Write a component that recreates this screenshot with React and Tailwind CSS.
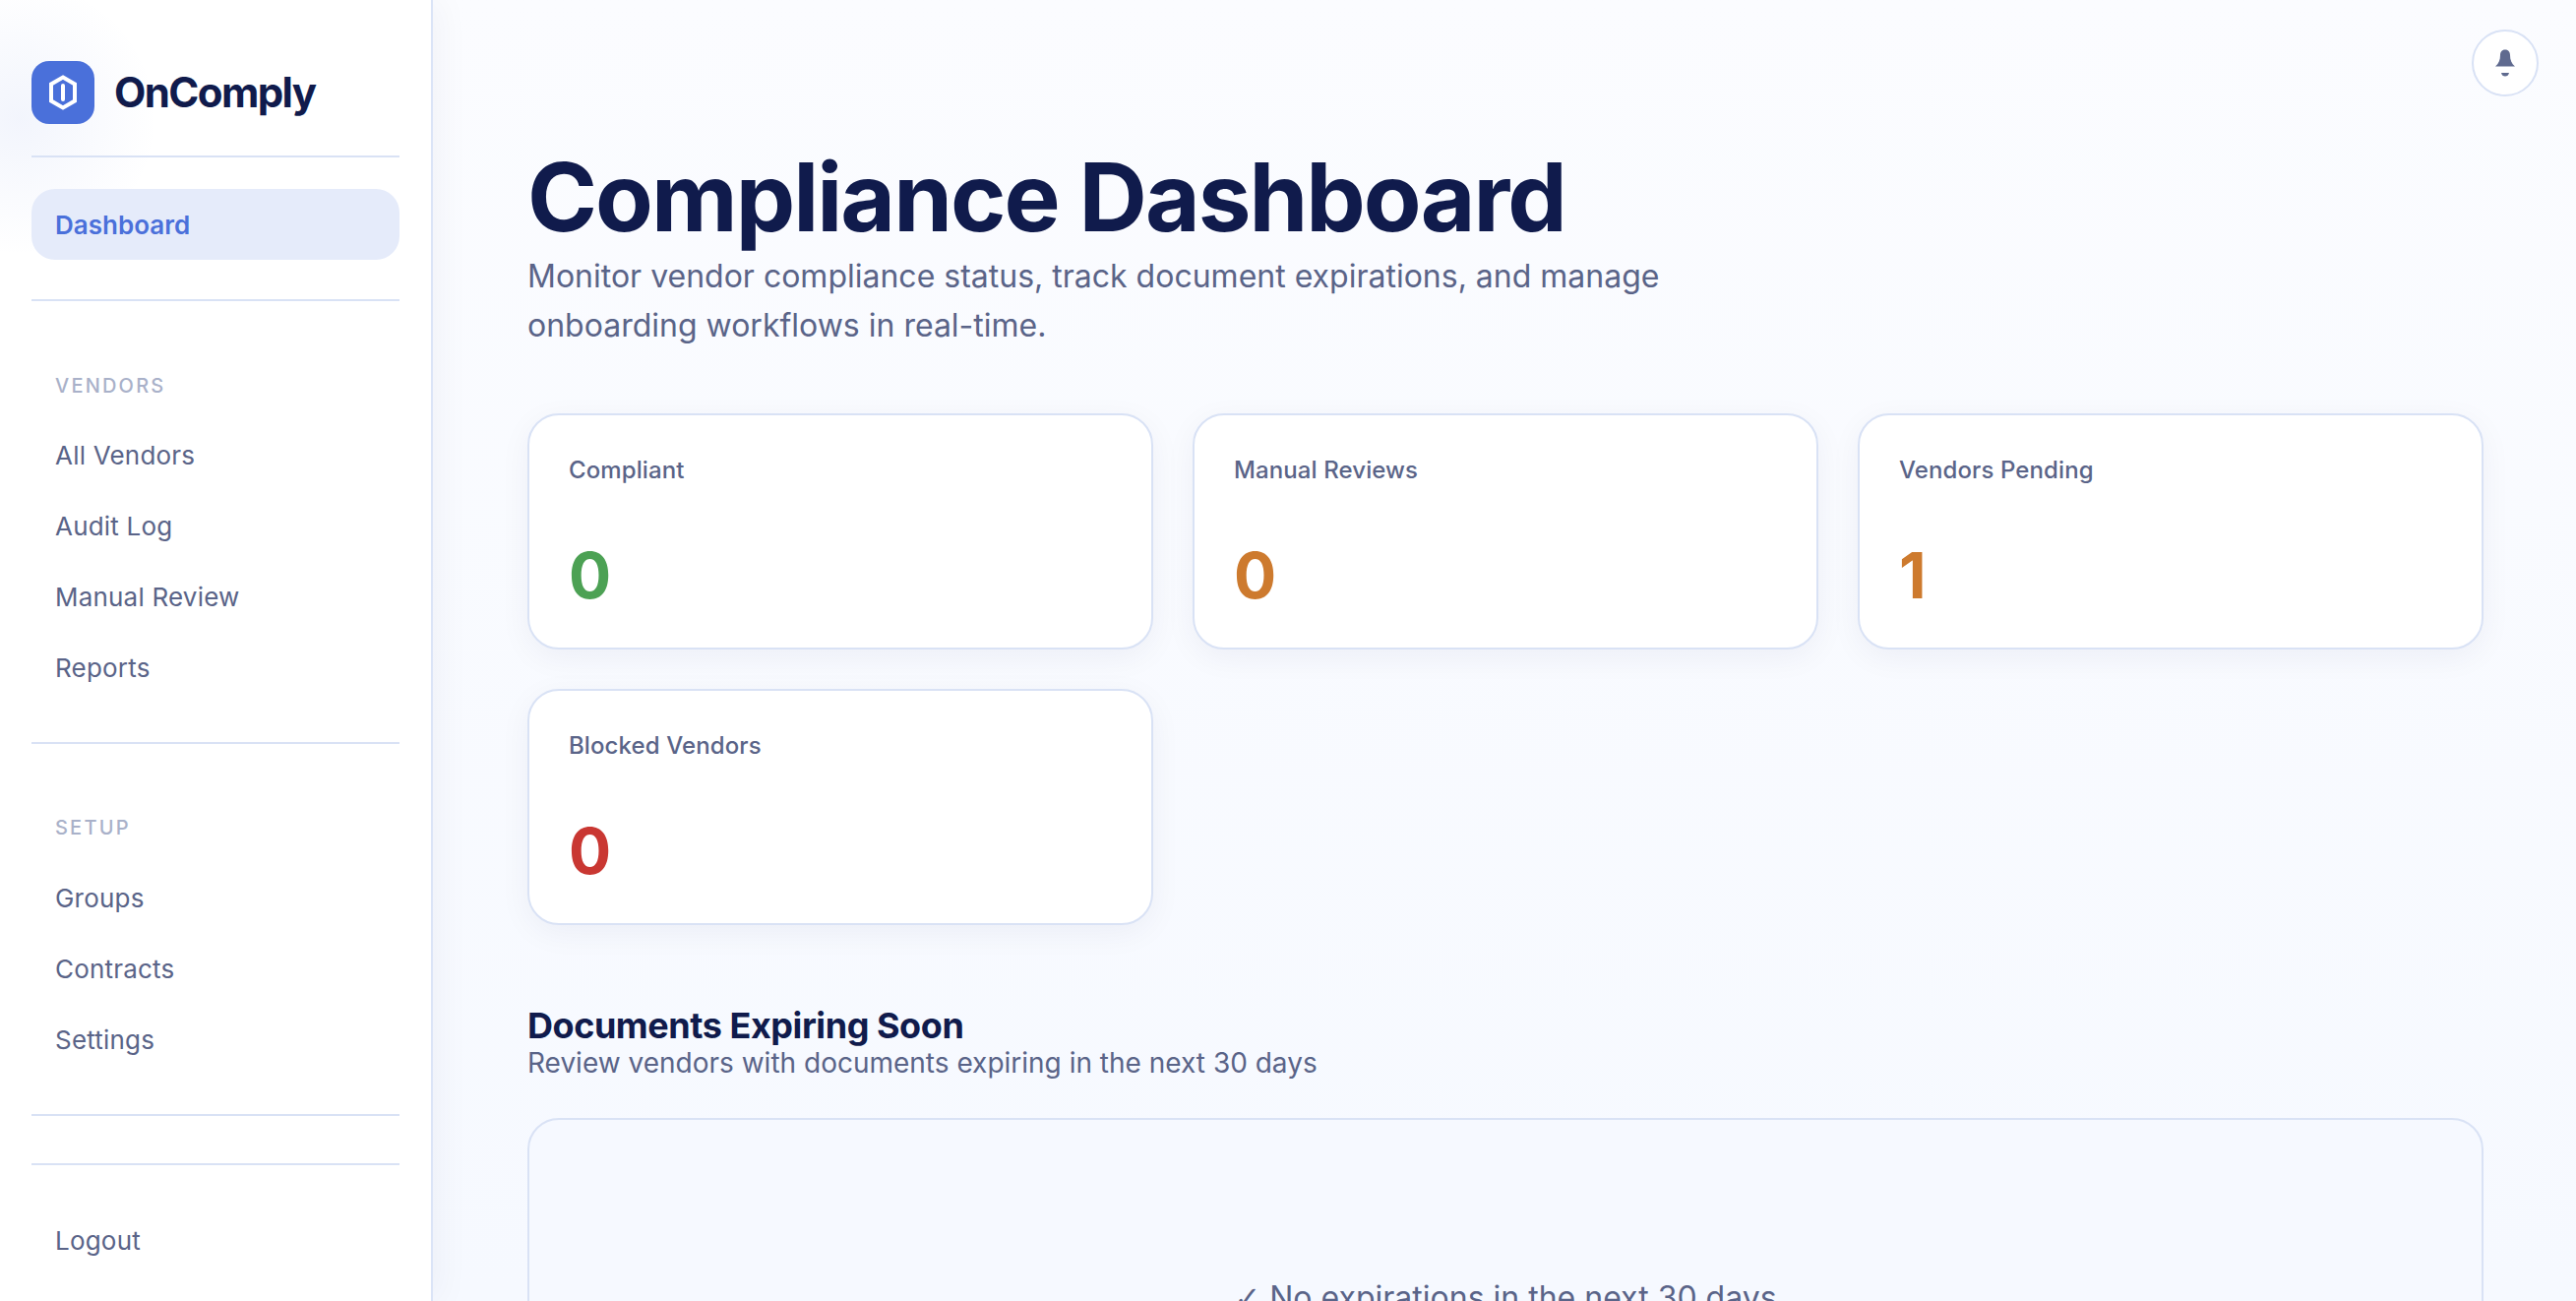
const font = { fontFamily: "Inter, sans-serif" };

function Divider({ className = "" }) {
  return <div className={`h-[2px] bg-[#d9e2f5] ${className}`} />;
}

function NavItem({ label }) {
  return (
    <div className="h-[72px] px-6 flex items-center text-[26px] tracking-[0.2px] text-[#5a6488] font-normal">
      {label}
    </div>
  );
}

function NavLabel({ label }) {
  return (
    <div className="px-6 text-[20px] leading-[24px] tracking-[2.2px] uppercase text-[#a9b1c9] font-medium">
      {label}
    </div>
  );
}

function StatCard({ label, value, color }) {
  return (
    <div className="h-[240px] bg-white rounded-[32px] border-2 border-[#d9e2f5] shadow-[0_8px_32px_rgba(15,27,76,0.05)] px-10 pt-10">
      <div className="text-[24px] leading-[32px] tracking-[0.1px] font-medium text-[#5a6488]">{label}</div>
      <div className={`mt-[51px] text-[64px] leading-[80px] font-bold ${color}`}>{value}</div>
    </div>
  );
}

export default function App() {
  return (
    <div
      className="h-screen w-full flex overflow-hidden bg-gradient-to-b from-[#fbfcff] to-[#f6f9ff]"
      style={font}
    >
      <aside className="relative z-10 w-[440px] shrink-0 bg-white border-r-2 border-[#dbe4f7] shadow-[8px_0_32px_rgba(15,27,76,0.04)] px-8 flex flex-col">
        <div className="absolute left-0 top-[-20px] w-[200px] h-[280px] bg-[radial-gradient(circle_at_20px_140px,rgba(75,113,220,0.07),rgba(75,113,220,0)_140px)]" />
        <div className="relative h-[158px] pt-[62px] flex items-start gap-5 shrink-0">
          <div className="w-16 h-16 rounded-[18px] bg-[#4a70da] flex items-center justify-center">
            <svg width="32" height="38" viewBox="0 0 32 38" fill="none">
              <path d="M16 3.5 L28 10.5 V27.5 L16 34.5 L4 27.5 V10.5 Z" stroke="#fff" strokeWidth="4" strokeLinejoin="miter" />
              <path d="M16 12 V26" stroke="#fff" strokeWidth="4" strokeLinecap="round" />
            </svg>
          </div>
          <div className="h-16 pb-[2px] flex items-center text-[42px] font-bold tracking-[-1.6px] text-[#101b4c]">OnComply</div>
        </div>
        <Divider className="relative shrink-0" />
        <div className="relative mt-8 h-[72px] shrink-0 rounded-[24px] bg-[#e5ebfa] px-6 flex items-center text-[26px] font-semibold text-[#4a70da]">
          Dashboard
        </div>
        <Divider className="mt-10 shrink-0" />
        <div className="mt-[74px]"><NavLabel label="Vendors" /></div>
        <div className="mt-[22px]">
          <NavItem label="All Vendors" />
          <NavItem label="Audit Log" />
          <NavItem label="Manual Review" />
          <NavItem label="Reports" />
        </div>
        <Divider className="mt-[40px] shrink-0" />
        <div className="mt-[73px]"><NavLabel label="Setup" /></div>
        <div className="mt-[23px]">
          <NavItem label="Groups" />
          <NavItem label="Contracts" />
          <NavItem label="Settings" />
        </div>
        <Divider className="mt-[40px] shrink-0" />
        <Divider className="mt-[48px] shrink-0" />
        <div className="mt-[40px]"><NavItem label="Logout" /></div>
      </aside>

      <main className="relative flex-1 min-w-0 pl-24 pr-[94px] pt-[148px]">
        <div className="absolute top-[30px] right-[38px] w-[68px] h-[68px] rounded-full bg-white border-2 border-[#d9e2f5] flex items-center justify-center">
          <svg width="24" height="30" viewBox="0 0 24 30" fill="#5f6a8f">
            <path d="M12 1.5 C15.5 1.5 17 4 17 7 C17 12 18.5 15.5 22 18.5 H2 C5.5 15.5 7 12 7 7 C7 4 8.5 1.5 12 1.5 Z" />
            <path d="M8 25 H16 C15.5 27.5 14 28.5 12 28.5 C10 28.5 8.5 27.5 8 25 Z" />
          </svg>
        </div>
        <h1 className="text-[96px] leading-[104px] font-bold tracking-[-1.95px] text-[#101b4c]">Compliance Dashboard</h1>
        <p className="mt-[4px] max-w-[1200px] text-[32px] leading-[50px] text-[#5a6488]">
          Monitor vendor compliance status, track document expirations, and manage onboarding workflows in real-time.
        </p>
        <div className="mt-[64px] grid grid-cols-3 gap-x-10 gap-y-10">
          <StatCard label="Compliant" value="0" color="text-[#4ca154]" />
          <StatCard label="Manual Reviews" value="0" color="text-[#cd7a2e]" />
          <StatCard label="Vendors Pending" value="1" color="text-[#cd7a2e]" />
          <StatCard label="Blocked Vendors" value="0" color="text-[#c93732]" />
        </div>
        <h2 className="mt-[80px] text-[36px] leading-[44px] font-bold text-[#101b4c] tracking-[-0.45px]">Documents Expiring Soon</h2>
        <p className="text-[28px] leading-[32px] text-[#5a6488]">Review vendors with documents expiring in the next 30 days</p>
        <div className="mt-[40px] h-[400px] rounded-[32px] border-2 border-[#d9e2f5] bg-[#f6f9ff] pt-[157px] text-center text-[32px] text-[#5a6488]">
          <span style={{ fontFamily: "'DejaVu Sans', sans-serif" }}>✓</span> No expirations in the next 30 days
        </div>
      </main>
    </div>
  );
}
